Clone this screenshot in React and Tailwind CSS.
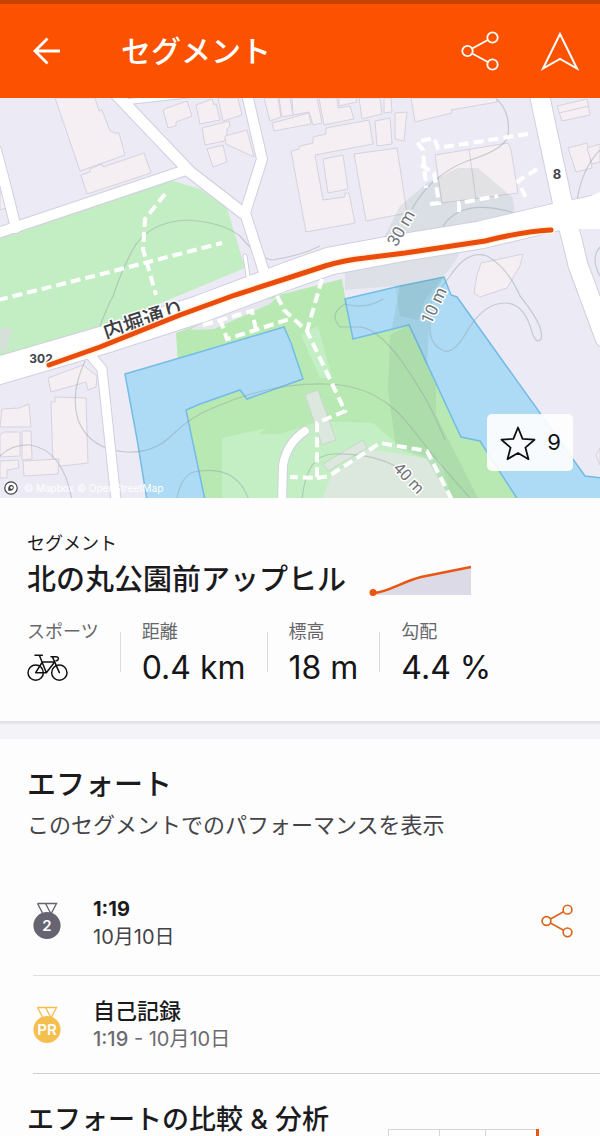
import React from "react";

const BUILDINGS = [
  "55,98 95,98 99,111 102,110 110,131 115,133 119,133 125,155 80,171",
  "81,175 90,172 90,169 102,164 103,167 144,153 151,173 87,194",
  "163,110 167,108 187,101 192,116 176,122 176,126 168,128",
  "196,105 212,99 214,105 216,104 220,120 200,124",
  "218,98 238,98 242,115 223,121",
  "202,128 229,121 230,126 227,129 227,135 224,141 205,145",
  "225,136 247,130 254,157 226,144",
  "207,149 223,145 227,162 213,167",
  "264,98 278,98 281,117 270,121",
  "279,98 290,98 293,115 282,117",
  "292,98 317,98 322,123 313,125 309,112 293,115",
  "272,123 309,113 311,124 274,131",
  "319,98 337,98 338,108 350,106 354,119 324,125",
  "339,98 356,98 357,102 339,106",
  "359,98 380,98 382,114 362,119",
  "384,98 391,98 392,112 384,113",
  "291,151 299,149 300,146 313,143 313,137 326,134 326,128 369,120 373,144 315,155 323,200 345,197 345,193 349,193 355,223 306,232",
  "323,159 343,155 348,189 328,193",
  "354,154 397,148 407,213 366,221",
  "375,121 390,118 392,144 377,146",
  "395,113 407,112 404,141 395,139",
  "411,98 496,98 497,102 451,110 452,113 415,122",
  "557,106 587,99 590,115 562,121",
  "568,148 587,143 592,168 576,172",
  "587,148 600,144 600,162 592,164",
  "435,155 508,143 511,150 518,193 442,203",
  "481,263 523,254 520,266 507,288 480,297 474,293 477,275",
  "48,378 83,365 97,376 96,387 88,390 86,382 51,392",
  "51,402 55,402 55,397 86,398 88,463 53,467",
  "2,409 19,408 29,404 31,427 0,427",
  "0,435 4,432 20,432 20,456 0,457",
  "22,431 31,431 32,459 22,460",
  "23,461 59,459 58,474 24,476",
  "0,461 18,460 19,468 7,470 7,478 0,478",
  "0,192 4,190 6,208 0,210",
  "596,455 600,448 600,465",
];

const SIDE_ROADS = [
  ["M-4 150 L4 180 L16 228", 10],
  ["M-5 234 L16 227 L186 170", 10],
  ["M112 90 L190 172 L243 213", 11],
  ["M124 102 L205 93", 5],
  ["M247 94 L262 159 L245 213 L265 275", 10],
  ["M86 350 L102 369 L116 500", 9],
  ["M245 256 L248 276", 3],
  ["M305 431 Q287 443 283 465 L282 502", 8],
];

const MAIN_ROADS = [
  ["M538 88 L564 210 L572 240 L578 265 L605 338", 19],
  ["M-10 373 L110 338 L200 309 L290 275 L330 261 L400 248 L480 235 L552 218 L610 206", 27],
];

const PATHS = [
  "M165 194 L145 219 L143 249 L156 295",
  "M-2 300 L90 277 L222 243",
  "M277 296 L284 310 L307 331 L345 411 L317 423 L317 478 L290 477",
  "M322 279 L307 331",
  "M220 319 L227 339 L290 319",
  "M203 325 L252 311 L256 330",
  "M317 478 L329 476 L380 443 L427 451 L452 500",
  "M528 134 L438 148 L434 138 L417 142 L423 150 L426 188",
  "M421 165 L434 173 L439 203 L430 204",
  "M459 212 L459 203 L498 196",
  "M537 169 L518 181 L527 200",
];

const CONTOURS = [
  "M100 326 Q108 305 113 296 Q122 270 132 251 Q147 222 187 220 Q222 222 240 236 Q258 258 272 260 Q300 256 320 246",
  "M85 361 Q70 393 78 420 Q90 450 127 452 Q155 453 172 435 Q190 417 215 407 Q270 383 325 384 Q380 384 413 430 Q440 465 472 500",
  "M0 456 Q12 444 30 445 Q63 450 72 500",
  "M383 299 Q365 310 345 304 Q328 314 340 327 L357 327 Q375 326 400 359 Q430 400 445 440",
  "M497 99 Q511 113 508 136 Q504 150 467 161 Q430 176 412 209",
  "M443 226 Q462 197 515 213",
  "M450 276 Q468 249 487 256 Q508 268 520 296 Q545 327 541 339 Q536 345 532 332 Q524 303 505 303 Q485 303 469 328 Q455 354 444 351 Q428 344 430 323 L432 300 Z",
  "M302 500 Q306 455 333 454 Q375 453 400 469",
  "M177 498 Q182 471 200 471 Q237 466 249 500",
  "M577 201 Q582 168 600 150",
  "M600 247 Q590 258 600 276",
];

function SegmentMap() {
  return (
    <svg
      viewBox="0 98 600 400"
      preserveAspectRatio="xMidYMid slice"
      className="block h-[400px] w-full"
      role="img"
      aria-label="地図"
    >
      <rect x="0" y="98" width="600" height="400" fill="#ecebf5" />
      <polygon points="0,235 170,180 200,189 227,208 245,268 120,320 0,359" fill="#c3edc3" />
      <polygon points="0,329 11,327 12,337 7,340 9,350 2,352 0,346" fill="#d6e0d8" />
      <polygon points="176,333 275,296 342,279 346,302 353,340 409,324 461,437 480,441 518,498 200,498 180,400" fill="#b8e9b2" />
      <polygon points="203,322 262,300 276,298 270,304 214,329 190,330" fill="#e6e6ef" />
      <polygon points="222,438 267,428 258,434 280,434 320,421 373,423 400,447 440,460 452,498 222,498" fill="#c4efc5" />
      <polygon points="301,335 318,326 332,378 320,378" fill="#c4efc5" />
      <g fill="#addbf5" stroke="#74bbe6" strokeWidth="1.5">
        <polygon points="125,374 200,352 284,327 291,343 303,379 247,399 240,390 200,404 186,410 205,500 147,500 137,439" />
        <polygon points="345,299 400,286 444,277 451,295 457,297 585,476 602,478 602,500 518,500 480,441 461,437 409,325 353,339" />
      </g>
      <g fill="#f5eff4" stroke="#d6d2de">
        {BUILDINGS.map((points) => (
          <polygon key={points} points={points} />
        ))}
        <path d="M469 149 L476 199 M559 113 L589 106" fill="none" />
      </g>
      <g fill="#dce7dd" stroke="#cbd6ce">
        <polygon points="323,498 330,478 367,449 400,454 427,459 450,498" stroke="none" />
        <polygon points="305,395 318,390 336,440 322,445" />
        <polygon points="323,464 363,440 367,448 328,471" />
      </g>
      <g fill="#4d7a68">
        <polygon points="380,245 400,206 427,183 458,168 478,168 513,198 515,215 460,228" fillOpacity="0.11" />
        <polygon points="345,272 400,258 462,248 455,262 425,300 418,320 400,316 395,286 345,290" fillOpacity="0.09" />
        <polygon points="400,286 444,277 430,300 427,365 409,325 392,328" fillOpacity="0.12" />
        <polygon points="390,335 409,325 436,385 436,415 478,498 450,498 427,459 396,448 388,390" fillOpacity="0.1" />
      </g>
      <g fill="none" stroke="#8f9b9f" strokeOpacity="0.42" strokeWidth="1.2">
        {CONTOURS.map((d) => (
          <path key={d} d={d} />
        ))}
      </g>
      <g fill="none" strokeLinecap="round" strokeLinejoin="round">
        {SIDE_ROADS.map(([d, width]) => (
          <path key={d} d={d} stroke="#cfcfe0" strokeWidth={width + 2} />
        ))}
        {MAIN_ROADS.map(([d, width]) => (
          <path key={d} d={d} stroke="#cfcfe0" strokeWidth={width + 2} />
        ))}
        <g stroke="#ffffff">
          {SIDE_ROADS.map(([d, width]) => (
            <path key={d} d={d} strokeWidth={width} />
          ))}
          {MAIN_ROADS.map(([d, width]) => (
            <path key={d} d={d} strokeWidth={width} />
          ))}
        </g>
      </g>
      <polygon points="572,204 600,192 602,192 602,229 575,229" fill="#ffffff" />
      <g fill="none" stroke="#ffffff" strokeWidth="4" strokeDasharray="10 5">
        {PATHS.map((d) => (
          <path key={d} d={d} />
        ))}
      </g>
      <g
        fontFamily="Roboto, 'Noto Sans CJK JP', sans-serif"
        textAnchor="middle"
        stroke="#ffffff"
        strokeWidth="3"
        strokeLinejoin="round"
        paintOrder="stroke"
        fill="#6f7377"
      >
        <text transform="translate(406 231) rotate(-60)" fontSize="17">30 m</text>
        <text transform="translate(439 308) rotate(-65)" fontSize="17">10 m</text>
        <text transform="translate(405 482) rotate(46)" fontSize="16">40 m</text>
        <text transform="translate(146 327) rotate(-18)" fontSize="21" fontWeight="500" fill="#3c3e44">内堀通り</text>
        <text x="41" y="363" fontSize="12" fontWeight="700" fill="#3f424c" fontFamily="Inter, sans-serif">302</text>
        <text x="557" y="179" fontSize="13" fontWeight="700" fill="#3f424c" fontFamily="Inter, sans-serif">8</text>
      </g>
      <path
        d="M49 365 L100 347 L180 315 L235 295 L285 279 L325 266 Q345 260 365 258 L405 253 L485 241 Q520 232 551 230"
        fill="none"
        stroke="#fff3e2"
        strokeWidth="8"
        strokeLinecap="round"
      />
      <path
        d="M49 365 L100 347 L180 315 L235 295 L285 279 L325 266 Q345 260 365 258 L405 253 L485 241 Q520 232 551 230"
        fill="none"
        stroke="#ea4c0c"
        strokeWidth="5"
        strokeLinecap="round"
      />
    </svg>
  );
}

function ShareIcon({ className, strokeWidth }) {
  return (
    <svg viewBox="0 0 38 40" className={className} fill="none" stroke="currentColor" strokeWidth={strokeWidth} aria-hidden="true">
      <circle cx="6.5" cy="20" r="5.2" />
      <circle cx="31.5" cy="6.5" r="5.2" />
      <circle cx="31.5" cy="33.5" r="5.2" />
      <path d="M11.2 17.5 L26.8 9 M11.2 22.5 L26.8 31" />
    </svg>
  );
}

function BikeIcon() {
  return (
    <svg viewBox="0 0 123 84" className="block h-7 w-[41px]" fill="none" stroke="#111" strokeWidth="4.5" strokeLinejoin="round" strokeLinecap="round" role="img" aria-label="自転車">
      <circle cx="26" cy="56" r="23" />
      <circle cx="97" cy="56" r="23" />
      <path d="M24 4 H46 M37 4 L58 56 H26 L46 24 H83 L58 56" />
      <path d="M72 8 H87 C97 8 96 21 87 20 M76 8 L97 56" />
    </svg>
  );
}

function Medal({ label, className }) {
  return (
    <svg viewBox="0 0 28 38" className={className} role="img" aria-label={label}>
      <path d="M4.5 1.5 H23.5 L18.5 11 M4.5 1.5 L9.5 11 M12.5 1.5 L17.5 11" fill="none" stroke="currentColor" strokeWidth="1.4" />
      <circle cx="14" cy="23.5" r="13.6" fill="currentColor" />
      <text x="14" y="29" textAnchor="middle" fontFamily="Inter, sans-serif" fontSize="15" fontWeight="600" fill="#fff">
        {label}
      </text>
    </svg>
  );
}

function Stat({ label, children }) {
  return (
    <div>
      <dt className="text-[18px] leading-6 text-[#66666b]">{label}</dt>
      <dd className="flex h-12 items-center text-[32px] leading-10 text-[#161618]">{children}</dd>
    </div>
  );
}

function Divider() {
  return <div className="mt-3 h-10 w-px bg-[#dcdce0]" />;
}

export default function App() {
  return (
    <div className="bg-[#fdfdfd] font-['Inter','Noto_Sans_CJK_JP',sans-serif] text-[#1b1b1d]">
      <header className="flex h-[98px] items-center border-t-4 border-[#c84200] bg-[#fc5200] pr-[21px] pl-8 text-white">
        <button type="button" aria-label="戻る">
          <svg viewBox="0 0 28 28" className="block size-7" fill="none" stroke="currentColor" strokeWidth="2.8" aria-hidden="true">
            <path d="M28 14 H3 M15.5 1.5 L3 14 L15.5 26.5" />
          </svg>
        </button>
        <h1 className="ml-[61px] flex-1 text-[30px] leading-10 font-medium">セグメント</h1>
        <button type="button" aria-label="共有">
          <ShareIcon className="block h-10 w-[38px]" strokeWidth="1.8" />
        </button>
        <button type="button" aria-label="ナビ" className="ml-[42px]">
          <svg viewBox="0 0 38 40" className="block h-10 w-[38px]" fill="none" stroke="currentColor" strokeWidth="2" aria-hidden="true">
            <path d="M19 3 L36 37.5 L19 28 L2 37.5 Z" />
          </svg>
        </button>
      </header>

      <section className="relative">
        <SegmentMap />
        <div className="absolute bottom-0 left-1 flex h-5 items-center gap-1.5 text-[10px] leading-5 text-white">
          <svg viewBox="0 0 14 14" className="block size-3.5" aria-hidden="true">
            <circle cx="7" cy="7" r="6.2" fill="#fff" stroke="#444" strokeWidth="1.2" />
            <path d="M4.4 9.8 C3.8 6.5 4.8 4 7.3 4 C9.8 4 10.5 6.5 9.2 8.2 C8.2 9.6 6.4 10 4.4 9.8 Z" fill="#444" />
            <circle cx="7.5" cy="6.6" r="1.3" fill="#fff" />
          </svg>
          <span>© Mapbox © OpenStreetMap</span>
        </div>
        <button type="button" className="absolute right-[27px] bottom-[27px] flex h-[57px] items-center gap-2.5 rounded-[5px] bg-white/90 px-3 text-[22px] text-[#111]">
          <svg viewBox="0 0 38 36" className="block h-9 w-[38px]" fill="none" stroke="currentColor" strokeWidth="1.8" strokeLinejoin="round" aria-hidden="true">
            <path d="M19 2.5 L23.6 13.8 L35.5 14.7 L26.4 22.6 L29.5 34.2 L19 28 L8.5 34.2 L11.6 22.6 L2.5 14.7 L14.4 13.8 Z" />
          </svg>
          9
        </button>
      </section>

      <section className="px-[27px] pt-[34px] pb-[29px]">
        <p className="text-[18px] leading-6">セグメント</p>
        <div className="flex items-center gap-[23px]">
          <h2 className="text-[29px] leading-12 font-medium">北の丸公園前アップヒル</h2>
          <svg viewBox="0 0 102 32" className="block h-8 w-[102px]" role="img" aria-label="標高グラフ">
            <path d="M4 29 C18 29 32 18 52 13 L102 3 V31 H4 Z" fill="#dbdae6" />
            <path d="M4 29 C18 29 32 18 52 13 L102 3" fill="none" stroke="#e8560f" strokeWidth="2.6" />
            <circle cx="4" cy="28.5" r="3.5" fill="#e8560f" />
          </svg>
        </div>
        <dl className="mt-4 flex gap-[21px]">
          <Stat label="スポーツ">
            <BikeIcon />
          </Stat>
          <Divider />
          <Stat label="距離">0.4 km</Stat>
          <Divider />
          <Stat label="標高">18 m</Stat>
          <Divider />
          <Stat label="勾配">4.4 %</Stat>
        </dl>
      </section>

      <div className="h-[18px] bg-linear-to-b from-[#dcdce6] to-[#f3f3f8] to-25%" />

      <section className="pt-[26px]">
        <h2 className="px-[27px] text-[29px] leading-10 font-medium">エフォート</h2>
        <p className="px-[27px] text-[22px] leading-10 text-[#444448]">このセグメントでのパフォーマンスを表示</p>
        <ul className="ml-[33px]">
          <li className="flex items-center border-b border-[#dededf] pt-[46px] pr-[27px] pb-6">
            <Medal label="2" className="block h-[38px] w-7 text-[#666471]" />
            <div className="ml-8 flex-1 pt-1">
              <p className="text-[20px] leading-7 font-bold">1:19</p>
              <p className="text-[20px] leading-7 text-[#444448]">10月10日</p>
            </div>
            <button type="button" aria-label="共有" className="text-[#d9661c]">
              <ShareIcon className="block h-[34px] w-8" strokeWidth="2" />
            </button>
          </li>
          <li className="flex items-center border-b border-[#d0d0d2] pt-[21px] pb-5">
            <Medal label="PR" className="block h-[38px] w-7 text-[#f5bf4f]" />
            <div className="ml-8">
              <p className="text-[22px] leading-7 font-medium">自己記録</p>
              <p className="text-[20px] leading-7 text-[#6b6b70]">
                <span className="font-medium">1:19</span> - 10月10日
              </p>
            </div>
          </li>
        </ul>
      </section>

      <section className="flex items-end pt-[30px] pl-[27px]">
        <h2 className="w-[361px] text-[27px] leading-8 font-medium">エフォートの比較 &amp; 分析</h2>
        <svg viewBox="0 0 151 7" className="block h-[7px] w-[151px]" role="img" aria-label="比較グラフ">
          <path d="M0.5 7 V0.5 H149 M51.5 0.5 V7 M97.5 0.5 V7" fill="none" stroke="#d6d6d8" />
          <rect x="148" y="0" width="3" height="7" fill="#e8560f" />
        </svg>
      </section>
    </div>
  );
}
